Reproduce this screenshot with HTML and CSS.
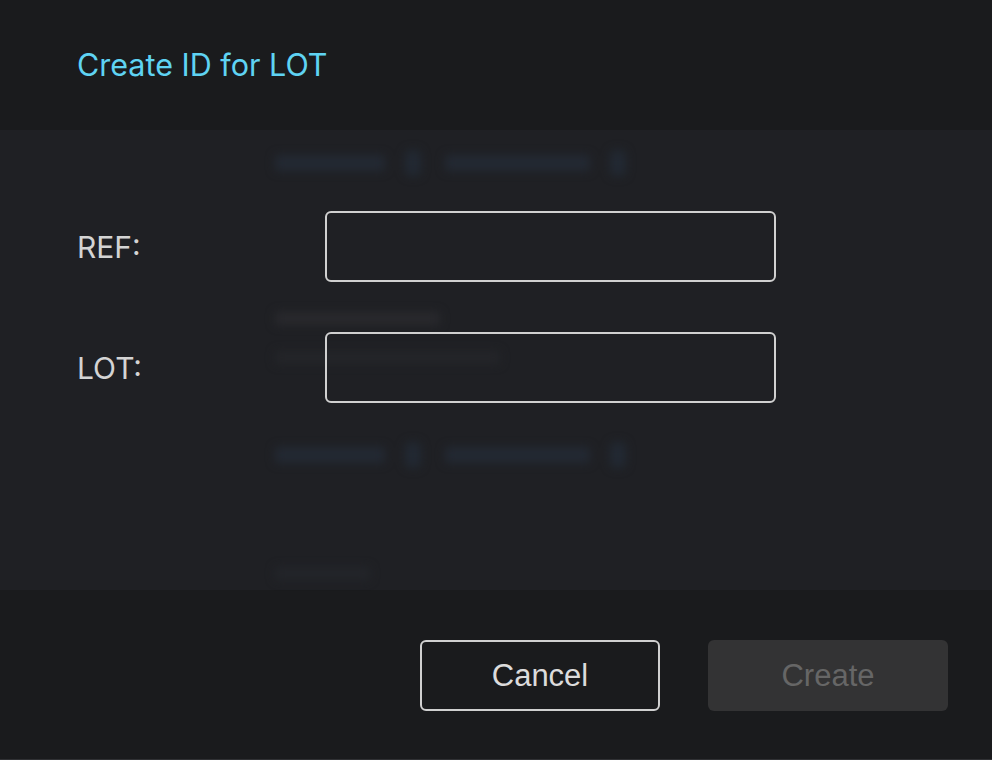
FILE: index.html
```html
<!DOCTYPE html>
<html lang="en">
<head>
  <meta charset="UTF-8">
  <title>Create ID for LOT</title>
  <link rel="stylesheet" href="styles.css">
</head>
<body>
  <div class="dialog">
    <header class="dialog-head">
      <h1>Create ID for LOT</h1>
    </header>

    <main class="dialog-body">
      <div class="ghost" aria-hidden="true">
        <div class="ghost-row">
          <span class="blob short"></span><span class="pin"></span>
          <span class="blob long"></span><span class="pin"></span>
        </div>
        <div class="ghost-line title"></div>
        <div class="ghost-line sub"></div>
        <div class="ghost-row second">
          <span class="blob short"></span><span class="pin"></span>
          <span class="blob long"></span><span class="pin"></span>
        </div>
        <div class="ghost-line foot"></div>
      </div>

      <form class="form">
        <div class="row">
          <label for="ref">REF:</label>
          <input id="ref" type="text">
        </div>
        <div class="row">
          <label for="lot">LOT:</label>
          <input id="lot" type="text">
        </div>
      </form>
    </main>

    <footer class="dialog-foot">
      <button class="btn btn-cancel" type="button">Cancel</button>
      <button class="btn btn-create" type="button" disabled>Create</button>
    </footer>
  </div>
</body>
</html>
```

FILE: styles.css
```css
body {
  margin: 0;
  background: #1a1b1d;
  font-family: Inter, 'Noto Sans', sans-serif;
}

.dialog {
  width: 992px;
  height: 760px;
  display: flex;
  flex-direction: column;
  border-bottom: 1px solid #303134;
  box-sizing: border-box;
}

.dialog-head {
  height: 130px;
  background: #1a1b1d;
  display: flex;
  align-items: center;
  padding-left: 77px;
  box-sizing: border-box;
}
.dialog-head h1 {
  margin: 0 0 2px;
  font-size: 30.5px;
  font-weight: 400;
  color: #5fd3f3;
}

.dialog-body {
  position: relative;
  height: 460px;
  background: #1f2024;
  padding: 81px 0 0 77px;
  box-sizing: border-box;
}

/* blurred page behind the dialog */
.ghost {
  position: absolute;
  top: 0;
  left: 0;
  right: 0;
  bottom: 0;
  padding: 20px 0 0 275px;
  filter: blur(5px);
  pointer-events: none;
}
.ghost-row {
  display: flex;
  align-items: center;
  gap: 20px;
  height: 26px;
}
.ghost-row.second {
  margin-top: 78px;
}
.blob {
  height: 16px;
  background: #232933;
  border-radius: 3px;
}
.blob.short { width: 110px; }
.blob.long { width: 145px; }
.pin {
  width: 16px;
  height: 26px;
  background: #222933;
  border-radius: 6px;
  margin-right: 4px;
}
.ghost-line {
  height: 13px;
  border-radius: 3px;
}
.ghost-line.title {
  width: 165px;
  margin-top: 136px;
  background: #29292d;
}
.ghost-line.sub {
  width: 225px;
  margin-top: 26px;
  background: #242529;
}
.ghost-line.foot {
  width: 95px;
  margin-top: 99px;
  background: #23252a;
}

.form {
  position: relative;
  display: flex;
  flex-direction: column;
  gap: 50px;
}
.row {
  display: flex;
  align-items: center;
}
.row label {
  width: 248px;
  font-size: 30px;
  color: #d4d4d4;
}
.row input {
  width: 451px;
  height: 71px;
  box-sizing: border-box;
  background: transparent;
  border: 2px solid #d0d0d0;
  border-radius: 6px;
  color: #ddd;
  font-size: 28px;
  padding: 0 16px;
  outline: none;
}

.dialog-foot {
  flex: 1;
  background: #1a1b1d;
  display: flex;
  justify-content: flex-end;
  align-items: flex-start;
  gap: 48px;
  padding: 50px 44px 0 0;
}

.btn {
  width: 240px;
  height: 71px;
  border-radius: 6px;
  font-family: 'Liberation Sans', Arial, sans-serif;
  font-size: 31px;
  cursor: pointer;
}
.btn-cancel {
  background: transparent;
  border: 2px solid #d0d0d0;
  color: #dcdcdc;
}
.btn-create {
  background: #333334;
  border: none;
  color: #666;
  cursor: default;
}
```
